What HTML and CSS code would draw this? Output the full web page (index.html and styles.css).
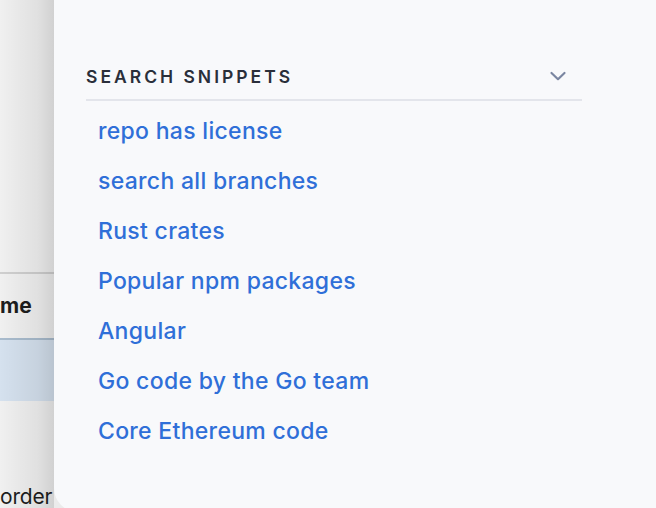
FILE: index.html
```html
<!DOCTYPE html>
<html lang="en">
<head>
<meta charset="utf-8">
<title>Search snippets</title>
<link rel="stylesheet" href="styles.css">
</head>
<body>
<div class="screen">
  <div class="backdrop">
    <div class="table">
      <div class="table-head">me</div>
      <div class="table-row"></div>
      <div class="table-foot">order</div>
    </div>
    <div class="dim"></div>
  </div>
  <aside class="panel">
    <div class="section-head">
      <h2 class="section-title">SEARCH SNIPPETS</h2>
      <svg class="chevron" width="20" height="20" viewBox="0 0 20 20" aria-hidden="true">
        <path d="M3.5 7 L10 13.2 L16.5 7" fill="none" stroke="#7a86a1" stroke-width="2.2" stroke-linecap="round" stroke-linejoin="round"/>
      </svg>
    </div>
    <ul class="snippets">
      <li><a class="snippet" href="#">repo has license</a></li>
      <li><a class="snippet" href="#">search all branches</a></li>
      <li><a class="snippet" href="#">Rust crates</a></li>
      <li><a class="snippet" href="#">Popular npm packages</a></li>
      <li><a class="snippet" href="#">Angular</a></li>
      <li><a class="snippet" href="#">Go code by the Go team</a></li>
      <li><a class="snippet" href="#">Core Ethereum code</a></li>
    </ul>
  </aside>
</div>
</body>
</html>
```

FILE: styles.css
```css
html, body {
  margin: 0;
  padding: 0;
}

body {
  font-family: Inter, "Noto Sans", "Liberation Sans", sans-serif;
  width: 656px;
  height: 508px;
  overflow: hidden;
}

.screen {
  display: flex;
  align-items: flex-start;
  width: 656px;
  height: 508px;
  background: #ebebeb;
  overflow: hidden;
}

.backdrop {
  position: relative;
  width: 54px;
  height: 508px;
  flex: none;
  background: #ffffff;
  overflow: hidden;
}

.table {
  padding-top: 272px;
}

.table-head {
  border-top: 2px solid #dcdcdc;
  height: 64px;
  line-height: 64px;
  font-size: 21px;
  font-weight: 700;
  color: #1f1f1f;
  white-space: nowrap;
}

.table-row {
  border-top: 2px solid #b3c7da;
  height: 61px;
  background: #e2effd;
}

.table-foot {
  margin-top: 84px;
  font-size: 21px;
  line-height: 24px;
  letter-spacing: -0.2px;
  color: #1f1f1f;
  white-space: nowrap;
}

.dim {
  position: absolute;
  inset: 0;
  background: linear-gradient(to right, rgba(0, 0, 0, 0.06), rgba(0, 0, 0, 0.12) 70%, rgba(0, 0, 0, 0.18));
}

.panel {
  flex: 1;
  height: 512px;
  background: #f8f9fb;
  border-bottom-left-radius: 24px;
  padding: 65px 74px 0 32px;
  box-sizing: border-box;
}

.section-head {
  display: flex;
  align-items: center;
  justify-content: space-between;
  height: 24px;
  padding-bottom: 10px;
  border-bottom: 2px solid #e3e5eb;
}

.section-title {
  margin: 0;
  font-size: 17.5px;
  line-height: 24px;
  font-weight: 600;
  letter-spacing: 3px;
  color: #2a2f3a;
}

.chevron {
  margin-right: 14px;
  margin-top: -2px;
}

.snippets {
  list-style: none;
  margin: 0;
  padding: 10px 0 0 12px;
}

.snippets li {
  height: 50px;
  line-height: 40px;
}

.snippet {
  font-size: 23px;
  font-weight: 500;
  letter-spacing: 0.3px;
  color: #2f6fd8;
  text-decoration: none;
  white-space: nowrap;
}
```
